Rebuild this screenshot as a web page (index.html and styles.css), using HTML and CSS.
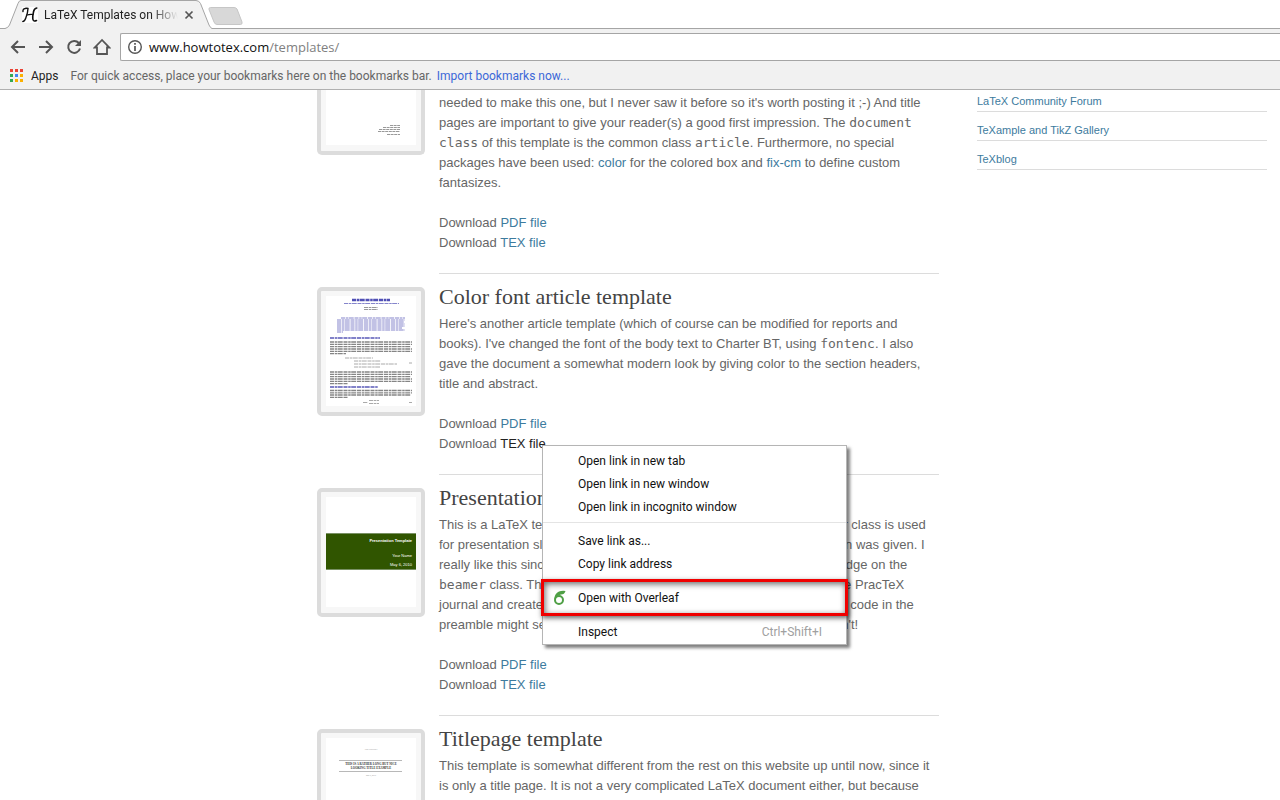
FILE: index.html
```html
<!DOCTYPE html>
<html lang="en">
<head>
<meta charset="utf-8">
<title>LaTeX Templates on HowToTeX</title>
<link rel="stylesheet" href="styles.css">
</head>
<body>
<header class="chrome">
  <div class="tabstrip">
    <div class="tab">
      <svg class="tab-shape" width="208" height="30" viewBox="0 0 208 30"><path d="M0 29L0.5 28Q3 28 4.500 25L13 3.500Q14 .5 16 .5H191Q194 .5 195.500 3.500L204 25Q205.500 28 207 28.500V30H0Z" fill="#f1f1f1"/><path d="M0 28.500Q3 28 4.500 25L13 3.500Q14 .5 16 .5H191Q194 .5 195.500 3.500L204 25Q205.500 28 207 28.500" fill="none" stroke="#a5a5a5"/></svg>
      <svg class="favicon" width="16" height="16" viewBox="0 0 16 16"><path fill="#fff" d="M0 0h16v16H0z"/><g fill="none" stroke="#111" stroke-linecap="round"><path d="M1 4.500Q.5 2 3 1.500Q5 1 6 1.500Q5.800 6 3.800 11Q2.600 14.500.8 14.500" stroke-width="1.400"/><path d="M14.800 1Q12 1.500 11.500 5Q10.500 9 10.800 12Q11.200 15 14.500 13.500" stroke-width="1.600"/><path d="M5 8Q8 7 11 7.500" stroke-width="1.200"/></g></svg>
      <span class="tab-title">LaTeX Templates on How</span>
      <button class="tab-close" aria-label="Close tab"><svg width="10" height="10" viewBox="0 0 10 10"><path d="M1.500 1.500l7 7M8.500 1.500l-7 7" stroke="#555" stroke-width="1.700"/></svg></button>
    </div>
    <button class="newtab" aria-label="New tab"><svg width="36" height="18" viewBox="0 0 36 18"><path d="M2.500.5H26Q28 .5 29 2L34 15Q34.500 17.500 32.500 17.500H9Q7 17.500 6 15L1 2.500Q.5.5 2.500.5Z" fill="#d8d8d8" stroke="#c6c6c6"/></svg></button>
  </div>
  <div class="toolbar">
    <button class="nav" aria-label="Back"><svg width="16" height="16" viewBox="0 0 16 16"><path d="M15 8H2.500M8 2L2 8l6 6" fill="none" stroke="#555" stroke-width="2"/></svg></button>
    <button class="nav" aria-label="Forward"><svg width="16" height="16" viewBox="0 0 16 16"><path d="M1 8h12.500M8 2l6 6-6 6" fill="none" stroke="#555" stroke-width="2"/></svg></button>
    <button class="nav" aria-label="Reload"><svg width="16" height="16" viewBox="0 0 16 16"><path d="M12.800 4A6 6 0 1 0 14 9.500" fill="none" stroke="#555" stroke-width="2"/><path d="M15 1v6H9z" fill="#555"/></svg></button>
    <button class="nav" aria-label="Home"><svg width="18" height="18" viewBox="0 0 18 18"><path d="M9 2L1.800 9.500H4V16H14V9.500H16.200Z" fill="none" stroke="#555" stroke-width="1.800"/></svg></button>
    <div class="omnibox">
      <svg width="16" height="16" viewBox="0 0 16 16"><circle cx="8" cy="8" r="6.300" fill="none" stroke="#555" stroke-width="1.400"/><path d="M8 7v5M8 4v1.800" stroke="#555" stroke-width="1.700"/></svg>
      <div class="url" role="textbox" aria-label="Address" contenteditable="true" spellcheck="false">www.howtotex.com<span class="path">/templates/</span></div>
    </div>
  </div>
  <div class="bookmarks">
    <svg width="14" height="14" viewBox="0 0 14 14"><path fill="#ea4335" d="M0 0h3v3H0zM5 0h3v3H5zM10 0h3v3h-3z"/><path fill="#34a853" d="M0 5h3v3H0zM0 10h3v3H0z"/><path fill="#4285f4" d="M5 5h3v3H5z"/><path fill="#fbb000" d="M10 5h3v3h-3zM5 10h3v3H5zM10 10h3v3h-3z"/></svg>
    <a class="apps" href="#">Apps</a>
    <span class="hint">For quick access, place your bookmarks here on the bookmarks bar.</span>
    <a class="import" href="#">Import bookmarks now...</a>
  </div>
</header>

<div class="page">
  <main class="posts">
    <article class="post">
      <div class="thumb cut">
        <svg width="90" height="110" viewBox="0 0 90 110"><path fill="#fff" d="M0 0h90v110H0z"/><path d="M64 90.500h10M57 92.500h17M53 94.500h21M52 96.500h22M61 99.500h13" stroke="#999" stroke-dasharray="3 .6"/></svg>
      </div>
      <div class="body continued">
        <p>needed to make this one, but I never saw it before so it's worth posting it ;-) And title<br>pages are important to give your reader(s) a good first impression. The <code>document</code><br><code>class</code> of this template is the common class <code>article</code>. Furthermore, no special<br>packages have been used: <a href="#">color</a> for the colored box and <a href="#">fix-cm</a> to define custom<br>fantasizes.</p>
        <p>Download <a href="#">PDF file</a><br>Download <a href="#">TEX file</a></p>
      </div>
    </article>
    <article class="post">
      <div class="thumb">
        <svg width="90" height="110" viewBox="0 0 90 110"><path fill="#fff" d="M0 0h90v110H0z"/>
          <g fill="none" stroke-dasharray="4 .7 2.500 .5 5 .8">
            <path d="M26 4h38" stroke="#5050b5" stroke-width="2.500"/><path d="M18 7.500h55M15 22h64M11 24h68M11 26h67M11 28h68M11 30h68M11 32h65M11 34h68M11 36h6" stroke="#8585cb"/>
            <path d="M38 11.500h14M38 13.500h14" stroke="#999"/>
            <path d="M4 42h50M4 91h48" stroke="#5a5ab8" stroke-width="1.500"/>
            <path d="M4 46h82M4 48.300h82M4 50.600h81M4 53h82M4 55.300h82M4 57.600h16M4 76h82M4 78.300h82M4 80.600h81M4 83h82M4 85.300h82M4 87.600h18M4 94.500h82M4 96.800h82M4 99h81M4 101.300h18" stroke="#858585" stroke-width="1.300"/>
            <path d="M19 62h28M28 65h27M28 68h43M28 71h26M83 67h3M37 106.500h5M43 104.500h10M43 107.500h10M83 106.500h3" stroke="#aaa"/>
          </g></svg>
      </div>
      <div class="body">
        <h2>Color font article template</h2>
        <p>Here's another article template (which of course can be modified for reports and<br>books). I've changed the font of the body text to Charter BT, using <code>fontenc</code>. I also<br>gave the document a somewhat modern look by giving color to the section headers,<br>title and abstract.</p>
        <p>Download <a href="#">PDF file</a><br>Download <a class="active" href="#">TEX file</a></p>
      </div>
    </article>
    <article class="post">
      <div class="thumb">
        <svg width="90" height="110" viewBox="0 0 90 110"><path fill="#fff" d="M0 0h90v110H0z"/><path fill="#305500" d="M0 36h90v37H0z"/><path d="M0 36.500h90M0 72.500h90" stroke="#799164"/><g class="slide-text"><text class="slide-title" x="86" y="45">Presentation Template</text><text x="86" y="60">Your Name</text><text x="86" y="69">May 6, 2010</text></g></svg>
      </div>
      <div class="body">
        <h2>Presentation template</h2>
        <p>This is a LaTeX template for my presentations. The well-known beamer class is used<br>for presentation slides of the best kind with which my latest presentation was given. I<br>really like this since it only takes a little bit of very basic general knowledge on the<br><code>beamer</code> class. The template is entirely inspired by a recent article in the PracTeX<br>journal and created with quite a few simple code changes. Some of the code in the<br>preamble might seem very difficult to understand at first, but it really isn't!</p>
        <p>Download <a href="#">PDF file</a><br>Download <a href="#">TEX file</a></p>
      </div>
    </article>
    <article class="post">
      <div class="thumb">
        <svg width="90" height="110" viewBox="0 0 90 110"><path fill="#fff" d="M0 0h90v110H0z"/><path d="M13 22.500h63M13 33.500h63" stroke="#999" stroke-width=".7"/><g class="cover-text"><text class="cover-small" x="45" y="12">Your University</text><text x="45" y="27">THIS IS A RATHER LONG BUT NICE</text><text x="45" y="31">LOOKING TITLE EXAMPLE</text><text class="cover-small" x="45" y="38">May 6, 2010</text></g></svg>
      </div>
      <div class="body">
        <h2>Titlepage template</h2>
        <p>This template is somewhat different from the rest on this website up until now, since it<br>is only a title page. It is not a very complicated LaTeX document either, but because</p>
      </div>
    </article>
  </main>
  <aside>
    <ul class="links">
      <li><a href="#">LaTeX Community Forum</a></li>
      <li><a href="#">TeXample and TikZ Gallery</a></li>
      <li><a href="#">TeXblog</a></li>
    </ul>
  </aside>
</div>

<div class="menu" role="menu">
  <button role="menuitem">Open link in new tab</button>
  <button role="menuitem">Open link in new window</button>
  <button role="menuitem">Open link in incognito window</button>
  <hr>
  <button role="menuitem">Save link as...</button>
  <button role="menuitem">Copy link address</button>
  <hr>
  <button role="menuitem"><svg class="leaf" width="14" height="16" viewBox="0 0 14 16"><circle cx="6" cy="10" r="4" fill="none" stroke="#4f9f45" stroke-width="2"/><path d="M1.200 9Q1.500 3.500 6 1.500Q9 .5 12.500 1Q11.500 4.500 8 4.500Q5 4.800 3 8Z" fill="#4f9f45"/></svg>Open with Overleaf</button>
  <hr>
  <button role="menuitem">Inspect<kbd>Ctrl+Shift+I</kbd></button>
  <div class="highlight"></div>
</div>
</body>
</html>
```
FILE: styles.css
```css
* { box-sizing: border-box; }
body {
  margin: 0;
  height: 100vh;
  overflow: hidden;
  display: flex;
  flex-direction: column;
  background: #fff;
  color: #666;
  font: 13px/20px "Liberation Sans", Arial, sans-serif;
}
a { color: #3d7b9e; text-decoration: none; }
svg { display: block; flex: none; }
button { border: 0; padding: 0; background: none; font: inherit; color: inherit; }

.chrome {
  flex: none;
  background: #f1f1f1;
  border-bottom: 1px solid #b0b0b0;
  font-family: Roboto, "Open Sans", sans-serif;
  font-size: 12px;
}
.tabstrip {
  display: flex;
  height: 29px;
  padding-left: 5px;
  background: #fff;
  border-bottom: 1px solid #a5a5a5;
}
.tab {
  position: relative;
  display: flex;
  align-items: center;
  width: 208px;
  height: 30px;
  padding: 0 19px 0 17px;
}
.tab-shape { position: absolute; left: 0; top: 0; }
.favicon { position: relative; }
.tab-title {
  position: relative;
  flex: 1;
  margin: 0 6px;
  overflow: hidden;
  white-space: nowrap;
  color: #222;
  mask-image: linear-gradient(to right, #000 80%, transparent);
}
.tab-close { position: relative; }
.newtab { align-self: flex-start; margin: 7px 0 0 -5px; }

.toolbar { display: flex; align-items: center; height: 33px; padding: 2px 0 0 4px; }
.nav { display: grid; place-items: center; width: 28px; height: 28px; }
.omnibox {
  flex: 1;
  display: flex;
  align-items: center;
  gap: 6px;
  height: 28px;
  margin-left: 4px;
  padding-left: 6px;
  background: #fff;
  border: 1px solid #a5a5a5;
  border-right: 0;
  border-radius: 2px 0 0 2px;
}
.url { font: 13px/20px "Open Sans", "Noto Sans", sans-serif; color: #111; outline: 0; }
.path { color: #808080; }
.bookmarks { display: flex; align-items: center; height: 27px; padding: 0 10px; }
.apps { margin-left: 7px; color: #222; }
.hint { margin-left: 12px; }
.import { margin-left: 5px; color: #3c68d8; }

.page {
  flex: 1;
  min-height: 0;
  overflow: hidden;
  display: grid;
  grid-template-columns: 1fr 290px;
  column-gap: 38px;
  padding: 0 13px 0 317px;
}
.post { display: flex; align-items: flex-start; gap: 14px; }
.thumb {
  flex: none;
  width: 108px;
  height: 129px;
  margin-top: 13px;
  padding: 5px;
  border: 4px solid #dcdcdc;
  border-radius: 5px;
  background: #f7f7f7;
}
.cut {
  display: flex;
  align-items: flex-end;
  height: 65px;
  margin-top: 0;
  padding: 0 5px 6px;
  border-top: 0;
  border-radius: 0 0 5px 5px;
  overflow: hidden;
}
.slide-text { fill: #fff; text-anchor: end; font: 4px "Liberation Sans", sans-serif; }
.slide-title { font-size: 4px; font-weight: bold; }
.cover-text { fill: #333; text-anchor: middle; font: bold 3px "Liberation Serif", serif; }
.cover-small { fill: #888; font-size: 2px; font-weight: normal; }
.body {
  flex: 1;
  padding: 9px 0 20px;
  border-bottom: 1px solid #dcdcdc;
  white-space: nowrap;
}
.continued { padding-top: 3px; }
h2 {
  margin: 0 0 3px;
  color: #444;
  font: 22px/28px "Liberation Serif", Georgia, serif;
}
p { margin: 0; }
p + p { margin-top: 20px; }
code { font: 13px/19px "DejaVu Sans Mono", monospace; }
.active { color: #222; }

.links { margin: 0; padding: 0; list-style: none; font-size: 11px; }
.links li { height: 29px; padding-top: 8px; border-bottom: 1px solid #dcdcdc; }
.links li:first-child { height: 22px; padding-top: 1px; }

.menu {
  position: absolute;
  left: 542px;
  top: 445px;
  width: 305px;
  padding: 4px 0 0;
  background: #fff;
  border: 1px solid #b5b5b5;
  box-shadow: 3px 3px 3px rgba(0, 0, 0, .5);
  color: #111;
  font: 12px/23px Roboto, "Open Sans", sans-serif;
}
.menu button {
  position: relative;
  display: flex;
  justify-content: space-between;
  width: 100%;
  height: 23px;
  padding: 0 24px 0 35px;
}
.menu hr { height: 1px; margin: 3px 0 7px; border: 0; background: #e4e4e4; }
.menu kbd { font: inherit; color: #a0a0a0; }
.leaf { position: absolute; left: 10px; top: 3px; }
.highlight {
  position: absolute;
  left: -2px;
  right: -2px;
  top: 133px;
  height: 37px;
  border: 3px solid #f00000;
  box-shadow: 1px 2px 5px rgba(0, 0, 0, .6), inset 1px 2px 6px rgba(0, 0, 0, .6);
}
```
